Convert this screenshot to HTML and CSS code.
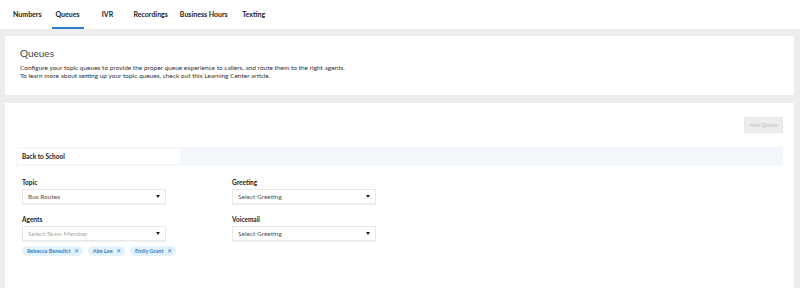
FILE: index.html
```html
<!DOCTYPE html>
<html lang="en">
<head>
    <meta charset="UTF-8">
    <title>Queues</title>
    <link rel="stylesheet" href="styles.css">
</head>
<body>
    <ul class="tabs">
        <li>Numbers</li>
        <li class="active">Queues</li>
        <li>IVR</li>
        <li>Recordings</li>
        <li>Business Hours</li>
        <li>Texting</li>
    </ul>
    <div class="card intro">
        <h2>Queues</h2>
        <p>Configure your topic queues to provide the proper queue experience to callers, and route them to the right agents.</p>
        <p>To learn more about setting up your topic queues, check out this Learning Center article.</p>
    </div>
    <div class="card editor">
        <div class="toolbar">
            <button class="add">Add Queue</button>
        </div>
        <div class="queue-bar">
            <input type="text" class="queue-name" value="Back to School">
        </div>
        <div class="fields">
            <div class="field">
                <label>Topic</label>
                <div class="select">Bus Routes</div>
            </div>
            <div class="field">
                <label>Greeting</label>
                <div class="select">Select Greeting</div>
            </div>
            <div class="field">
                <label>Agents</label>
                <div class="select placeholder">Select Team Member</div>
                <ul class="chips">
                    <li>Rebecca Benedict <span class="x">&#x2715;</span></li>
                    <li>Abe Lee <span class="x">&#x2715;</span></li>
                    <li>Emily Grant <span class="x">&#x2715;</span></li>
                </ul>
            </div>
            <div class="field">
                <label>Voicemail</label>
                <div class="select">Select Greeting</div>
            </div>
        </div>
    </div>
</body>
</html>
```

FILE: styles.css
```css
*{
    margin: 0;
    padding: 0;
    box-sizing: border-box;
}
li{
    list-style: none;
}
body{
    background: #ededed;
    font-family: Lato, "Liberation Sans", sans-serif;
    color: #333;
    height: 288px;
    overflow: hidden;
}
.tabs{
    display: flex;
    height: 29px;
    background: #fff;
    padding-left: 11px;
    gap: 8px;
}
.tabs li{
    min-width: 32px;
    padding: 0 2px;
    text-align: center;
    font-size: 7px;
    font-weight: bold;
    line-height: 29px;
    color: #222;
}
.tabs li.active{
    box-shadow: inset 0 -2px 0 #2f7fc8;
}
.card{
    background: #fff;
    margin: 7px 6px 0 5px;
}
.intro{
    height: 59px;
    padding: 11px 15px;
}
.intro h2{
    font-size: 10px;
    font-weight: normal;
    color: #444;
    line-height: 12px;
    margin-bottom: 5px;
}
.intro p{
    font-size: 6.5px;
    line-height: 8px;
    color: #333;
}
.editor{
    margin-top: 8px;
    height: 190px;
    padding: 14px 11px 0 11px;
}
.toolbar{
    display: flex;
    justify-content: flex-end;
    margin-bottom: 14px;
}
.add{
    width: 39px;
    height: 16px;
    border: 1px solid #e6e6e6;
    background: #ededed;
    color: #c9c9c9;
    font-family: inherit;
    font-size: 5.5px;
    font-weight: bold;
}
.queue-bar{
    background: #f3f7fc;
    height: 19px;
    padding: 2px 1px;
}
.queue-name{
    display: block;
    width: 163px;
    height: 15px;
    border: none;
    outline: none;
    background: #fff;
    padding-left: 5px;
    font-family: inherit;
    font-size: 6.5px;
    font-weight: bold;
    color: #222;
}
.fields{
    display: grid;
    grid-template-columns: 210px 144px;
    row-gap: 12px;
    padding: 13px 6px 0 6px;
}
.field label{
    display: block;
    font-size: 6.5px;
    font-weight: bold;
    color: #222;
    line-height: 8px;
    margin-bottom: 2px;
}
.select{
    position: relative;
    width: 144px;
    height: 15px;
    border: 1px solid #e8e8e8;
    box-shadow: 0 1px 1px rgba(0,0,0,0.05);
    padding-left: 5px;
    font-size: 6.5px;
    line-height: 13px;
    color: #555;
}
.select::after{
    content: "";
    position: absolute;
    right: 5px;
    top: 5px;
    border-left: 2px solid transparent;
    border-right: 2px solid transparent;
    border-top: 3px solid #222;
}
.select.placeholder{
    color: #aaa;
}
.chips{
    display: flex;
    gap: 5px;
    margin-top: 5px;
}
.chips li{
    height: 10px;
    padding: 0 4px 0 5px;
    border-radius: 5px;
    background: #e4f2fc;
    color: #3580c4;
    font-size: 5.5px;
    font-weight: bold;
    line-height: 10px;
    white-space: nowrap;
}
.chips .x{
    margin-left: 2px;
    font-weight: normal;
}
```
